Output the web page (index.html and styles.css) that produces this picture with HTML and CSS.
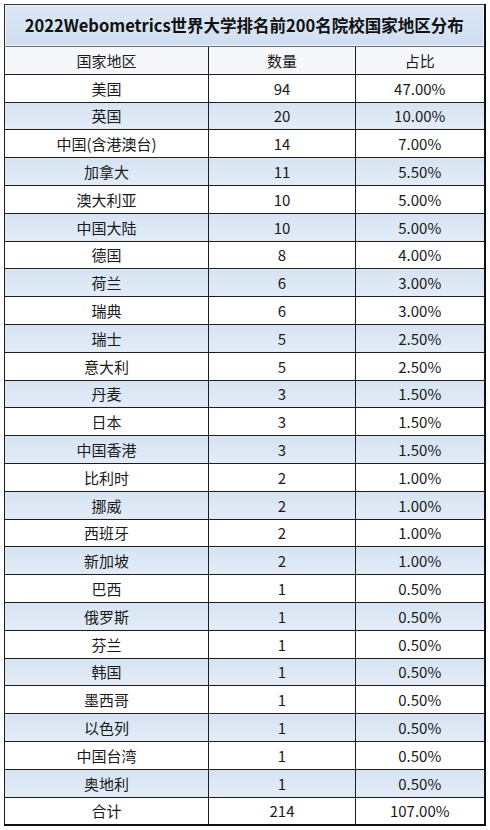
FILE: index.html
```html
<!DOCTYPE html>
<html lang="zh-CN">
<head>
<meta charset="utf-8">
<title>2022Webometrics世界大学排名前200名院校国家地区分布</title>
<link rel="stylesheet" href="styles.css">
</head>
<body>
<table class="dist">
  <colgroup>
    <col class="c1"><col class="c2"><col class="c3">
  </colgroup>
  <thead>
    <tr class="title"><th colspan="3">2022Webometrics世界大学排名前200名院校国家地区分布</th></tr>
    <tr class="head"><td>国家地区</td><td>数量</td><td>占比</td></tr>
  </thead>
  <tbody>
    <tr><td>美国</td><td>94</td><td>47.00%</td></tr>
    <tr><td>英国</td><td>20</td><td>10.00%</td></tr>
    <tr><td>中国(含港澳台)</td><td>14</td><td>7.00%</td></tr>
    <tr><td>加拿大</td><td>11</td><td>5.50%</td></tr>
    <tr><td>澳大利亚</td><td>10</td><td>5.00%</td></tr>
    <tr><td>中国大陆</td><td>10</td><td>5.00%</td></tr>
    <tr><td>德国</td><td>8</td><td>4.00%</td></tr>
    <tr><td>荷兰</td><td>6</td><td>3.00%</td></tr>
    <tr><td>瑞典</td><td>6</td><td>3.00%</td></tr>
    <tr><td>瑞士</td><td>5</td><td>2.50%</td></tr>
    <tr><td>意大利</td><td>5</td><td>2.50%</td></tr>
    <tr><td>丹麦</td><td>3</td><td>1.50%</td></tr>
    <tr><td>日本</td><td>3</td><td>1.50%</td></tr>
    <tr><td>中国香港</td><td>3</td><td>1.50%</td></tr>
    <tr><td>比利时</td><td>2</td><td>1.00%</td></tr>
    <tr><td>挪威</td><td>2</td><td>1.00%</td></tr>
    <tr><td>西班牙</td><td>2</td><td>1.00%</td></tr>
    <tr><td>新加坡</td><td>2</td><td>1.00%</td></tr>
    <tr><td>巴西</td><td>1</td><td>0.50%</td></tr>
    <tr><td>俄罗斯</td><td>1</td><td>0.50%</td></tr>
    <tr><td>芬兰</td><td>1</td><td>0.50%</td></tr>
    <tr><td>韩国</td><td>1</td><td>0.50%</td></tr>
    <tr><td>墨西哥</td><td>1</td><td>0.50%</td></tr>
    <tr><td>以色列</td><td>1</td><td>0.50%</td></tr>
    <tr><td>中国台湾</td><td>1</td><td>0.50%</td></tr>
    <tr><td>奥地利</td><td>1</td><td>0.50%</td></tr>
  </tbody>
  <tfoot>
    <tr class="total"><td>合计</td><td>214</td><td>107.00%</td></tr>
  </tfoot>
</table>
</body>
</html>
```
FILE: styles.css
```css
html, body {
  margin: 0;
  padding: 0;
  background: #ffffff;
}
body {
  padding: 4px 0 0 4px;
  font-family: "Noto Sans CJK SC", "Noto Sans", sans-serif;
  color: #1a1a1a;
}
.dist {
  border-collapse: collapse;
  table-layout: fixed;
  width: 480px;
  border-top: 1px solid #3a3a3a;
  border-left: 1px solid #2a2a2a;
  border-right: 2px solid #111111;
  border-bottom: 2px solid #111111;
}
.c1 { width: 204px; }
.c2 { width: 147px; }
.c3 { width: 129px; }
.dist th, .dist td {
  padding: 0;
  text-align: center;
  vertical-align: middle;
  line-height: 1;
}
.title th {
  height: 41px;
  font-size: 16.5px;
  font-weight: 700;
  color: #111111;
  background: linear-gradient(to bottom, #dde7f3, #cfdef0);
  border-bottom: 1px solid #6d6d6d;
  box-shadow: inset 1px 1px 0 #eef3fa, inset -1px -1px 0 #eef3fa;
}
.head td, tbody td, .total td {
  height: 26.8px;
  font-size: 15px;
  font-weight: 400;
  border: 1px solid #1e1e1e;
}
.head td {
  background: #f6f7fb;
  border-top-color: #6d6d6d;
}
tbody tr:nth-child(even) td {
  background: linear-gradient(to bottom, #d6e3f2, #e3ecf7);
}
tbody tr:nth-child(odd) td, .total td {
  background: #ffffff;
}
```
